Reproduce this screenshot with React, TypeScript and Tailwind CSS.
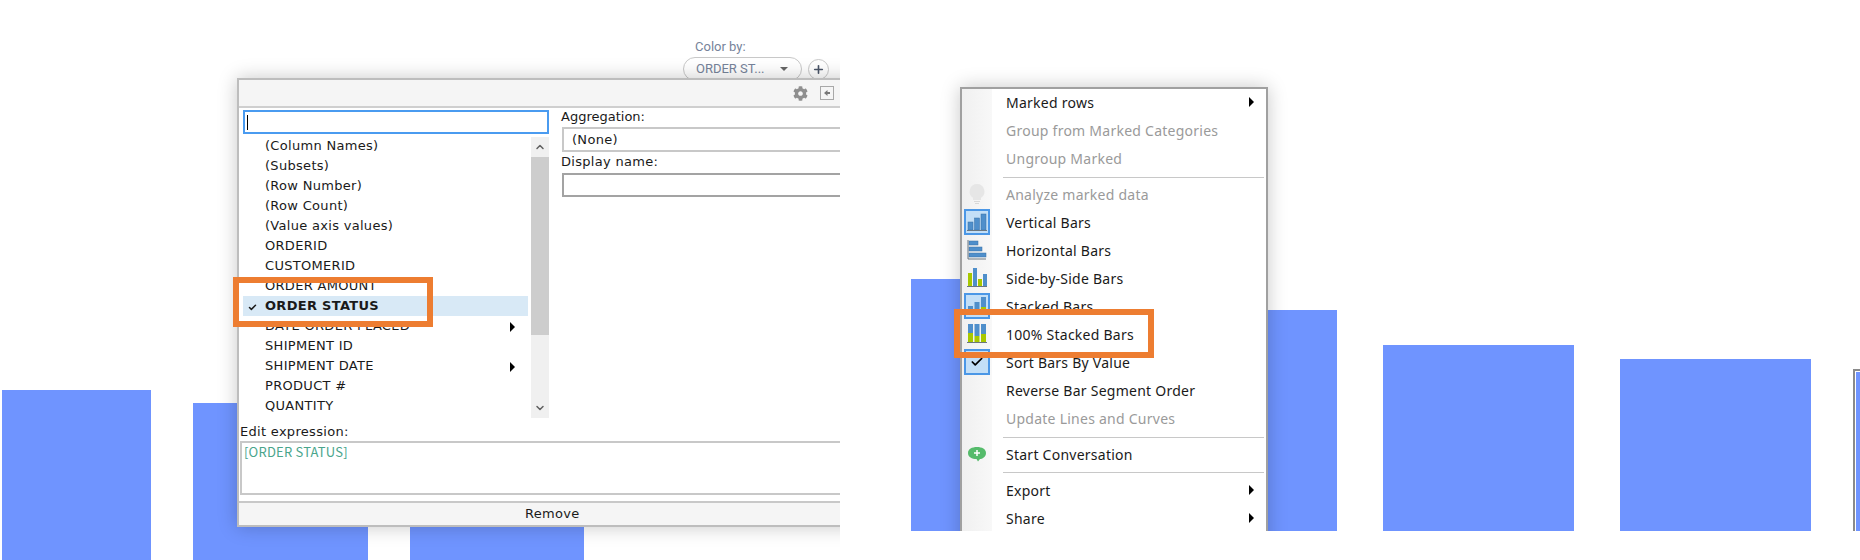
import { ChevronDown, ChevronUp, Check, Plus } from "lucide-react"
import { FaCog } from "react-icons/fa"

const fieldRows = [
  "(Column Names)",
  "(Subsets)",
  "(Row Number)",
  "(Row Count)",
  "(Value axis values)",
  "ORDERID",
  "CUSTOMERID",
  "ORDER AMOUNT",
  "ORDER STATUS",
  "DATE ORDER PLACED",
  "SHIPMENT ID",
  "SHIPMENT DATE",
  "PRODUCT #",
  "QUANTITY",
  "PRODUCT CATEGORY",
]

function Triangle() {
  return <span className="block w-0 h-0 border-y-[5px] border-y-transparent border-l-[5px] border-l-black" />
}

function BarsIcon({ kind }: { kind: string }) {
  const blue = "#4f8fcb"
  const lime = "#a8c800"
  return (
    <svg width="22" height="22" viewBox="0 0 22 22">
      {kind === "vertical" && (
        <g fill={blue} stroke="#3b70a5" strokeWidth="0.5">
          <rect x="2" y="11" width="5" height="8" />
          <rect x="8.500" y="7" width="5" height="12" />
          <rect x="15" y="3" width="5" height="16" />
        </g>
      )}
      {kind === "horizontal" && (
        <g fill={blue} stroke="#3b70a5" strokeWidth="0.5">
          <rect x="3" y="2" width="9" height="4" />
          <rect x="3" y="8" width="13" height="4" />
          <rect x="3" y="14" width="17" height="4" />
        </g>
      )}
      {kind === "side" && (
        <g>
          <rect x="2" y="6" width="4" height="13" fill={lime} />
          <rect x="7" y="1" width="4" height="18" fill={blue} />
          <rect x="12" y="12" width="4" height="7" fill={lime} />
          <rect x="17" y="7" width="4" height="12" fill={blue} />
        </g>
      )}
      {kind === "stacked" && (
        <g>
          <rect x="2" y="11" width="5" height="4" fill={blue} />
          <rect x="2" y="15" width="5" height="4" fill={lime} />
          <rect x="8.500" y="7" width="5" height="7" fill={blue} />
          <rect x="8.500" y="14" width="5" height="5" fill={lime} />
          <rect x="15" y="2" width="5" height="10" fill={blue} />
          <rect x="15" y="12" width="5" height="7" fill={lime} />
        </g>
      )}
      {kind === "full" && (
        <g>
          <rect x="2" y="1" width="5" height="9" fill={blue} />
          <rect x="2" y="10" width="5" height="9" fill={lime} />
          <rect x="8.500" y="1" width="5" height="12" fill={blue} />
          <rect x="8.500" y="13" width="5" height="6" fill={lime} />
          <rect x="15" y="1" width="5" height="10" fill={blue} />
          <rect x="15" y="11" width="5" height="8" fill={lime} />
        </g>
      )}
      {kind === "horizontal" ? (
        <path d="M2 1V20H20" fill="none" stroke="#6b7780" strokeWidth="1" />
      ) : (
        <path d="M1 19.500H21" fill="none" stroke="#6b7780" strokeWidth="1" />
      )}
    </svg>
  )
}

function MenuRow({
  label,
  muted,
  arrow,
  icon,
  active,
}: {
  label: string
  muted?: boolean
  arrow?: boolean
  icon?: React.ReactNode
  active?: boolean
}) {
  return (
    <div className="flex items-center h-7">
      <div className="w-[30px] h-7 shrink-0 flex items-center justify-center">
        {active ? (
          <div className="w-[26px] h-[26px] flex items-center justify-center border-2 border-[#4b97e6] bg-[#c3dff7]">
            {icon}
          </div>
        ) : (
          icon
        )}
      </div>
      <span className={"ml-[14px] flex-1 " + (muted ? "text-[#9a9a9a]" : "text-[#1a1a1a]")}>{label}</span>
      {arrow && (
        <span className="mr-[12px]">
          <Triangle />
        </span>
      )}
    </div>
  )
}

function MenuSeparator({ className }: { className: string }) {
  return (
    <div className={"flex " + className}>
      <div className="w-[41px] shrink-0" />
      <div className="flex-1 h-px bg-[#c8c8c8] mr-0.5" />
    </div>
  )
}

export default function App() {
  return (
    <div className="flex w-[1860px] h-[560px] bg-white overflow-hidden font-['Noto_Sans',sans-serif]">
      {/* Left — column selector */}
      <div className="relative w-[840px] h-[560px] shrink-0 overflow-hidden">
        <div className="flex items-end gap-[42px] h-full pl-0.5">
          <div className="w-[149px] h-[170px] bg-[#6f94ff]" />
          <div className="w-[175px] h-[157px] bg-[#6f94ff]" />
          <div className="w-[174px] h-[150px] bg-[#6f94ff]" />
        </div>

        <div className="absolute left-[683px] top-[38px] w-[150px]">
          <p className="ml-3 text-[13px] leading-[18px] text-[#76839a] font-['Roboto',sans-serif]">Color by:</p>
          <div className="flex items-center gap-[6px] mt-px">
            <div className="w-[119px] h-[24px] flex items-center rounded-full border border-[#c8c8c8] pl-[12px] text-[13px] text-[#76839a] font-['Roboto',sans-serif]">
              <span className="flex-1">ORDER ST...</span>
              <span className="mr-[13px] w-0 h-0 border-x-4 border-x-transparent border-t-[4px] border-t-[#666]" />
            </div>
            <div className="w-[21px] h-[21px] flex items-center justify-center rounded-full border border-[#c8c8c8]">
              <Plus size={13} strokeWidth={3} className="text-[#4a5568]" />
            </div>
          </div>
        </div>

        {/* Dialog runs off the right edge of the crop */}
        <div className="absolute left-[237px] top-[78px] w-[640px] h-[449px] flex flex-col bg-white border-2 border-[#bdbdbd] shadow-[0_0_18px_rgba(0,0,0,0.22)] font-['DejaVu_Sans',sans-serif] text-[13px] tracking-[0.3px] text-[#1a1a1a]">
          <div className="h-[28px] shrink-0 flex items-center bg-[#f5f5f5] border-b-2 border-[#cfcfcf] pl-[554px]">
            <FaCog size={15} className="text-[#8f8f8f]" />
            <div className="ml-[12px] w-[14px] h-[14px] flex items-center justify-center border border-[#a8a8a8]">
              <svg width="8" height="8" viewBox="0 0 8 8">
                <path d="M1 4L4.500 1V3H7V5H4.500V7z" fill="#777" />
              </svg>
            </div>
          </div>

          <div className="flex h-[311px] shrink-0">
            <div className="w-[310px] shrink-0 pl-1 pt-0.5">
              <div className="w-[306px] h-[24px] border-2 border-[#4a9bf0] flex items-center pl-0.5">
                <span className="w-px h-[15px] bg-black" />
              </div>
              <div className="flex h-[285px] pt-[2px]">
                <div className="w-[285px] h-[285px] shrink-0 overflow-hidden">
                  {fieldRows.map((row) => (
                    <div
                      key={row}
                      className={
                        "h-5 flex items-center relative pl-[22px] " +
                        (row === "ORDER STATUS" ? "bg-[#d8e9f6] font-bold" : "")
                      }
                    >
                      {row === "ORDER STATUS" && <Check size={9} strokeWidth={4} className="absolute left-[5px] top-[7px]" />}
                      <span>{row}</span>
                      {(row === "DATE ORDER PLACED" || row === "SHIPMENT DATE") && (
                        <span className="absolute left-[267px] top-[6px]">
                          <Triangle />
                        </span>
                      )}
                    </div>
                  ))}
                </div>
                <div className="ml-[3px] mt-px w-[18px] h-[281px] flex flex-col bg-[#f0f0f0]">
                  <div className="h-5 flex items-center justify-center">
                    <ChevronUp size={12} strokeWidth={3} className="text-[#606060]" />
                  </div>
                  <div className="h-[178px] bg-[#cdcdcd]" />
                  <div className="mt-auto h-5 flex items-center justify-center">
                    <ChevronDown size={12} strokeWidth={3} className="text-[#606060]" />
                  </div>
                </div>
              </div>
            </div>

            <div className="flex-1 pl-[12px]">
              <p className="h-[19px] leading-[17px] tracking-normal">Aggregation:</p>
              <div className="h-[25px] border-2 border-[#c8c8c8] flex items-center pl-2 ml-px">(None)</div>
              <p className="h-[21px] leading-[20px]">Display name:</p>
              <div className="h-[24px] border-2 border-[#a3a3a3] ml-px" />
            </div>
          </div>

          <div className="flex-1 flex flex-col pl-[1px]">
            <p className="h-[22px] leading-[26px]">Edit expression:</p>
            <div className="h-[54px] border-2 border-[#c8c8c8] pl-0.5 font-['Noto_Sans_CJK_KR',sans-serif] text-[13px] tracking-[0.2px] leading-[15px] pt-px text-[#4aa58c]">
              [ORDER STATUS]
            </div>
          </div>

          <div className="h-[24px] shrink-0 flex items-center bg-[#f5f5f5] border-t-2 border-[#c8c8c8] pl-[286px]">
            Remove
          </div>
        </div>

        <div className="absolute left-[233px] top-[277px] w-[200px] h-[50px] border-[6px] border-[#ed7d31]" />
      </div>

      {/* Right — bar chart context menu */}
      <div className="relative ml-[71px] w-[949px] h-[531px] overflow-hidden">
        <div className="flex items-end h-full">
          <div className="w-[190px] h-[252px] shrink-0 bg-[#6f94ff]" />
          <div className="ml-[45px] w-[191px] h-[221px] shrink-0 bg-[#6f94ff]" />
          <div className="ml-[46px] w-[191px] h-[186px] shrink-0 bg-[#6f94ff]" />
          <div className="ml-[46px] w-[191px] h-[172px] shrink-0 bg-[#6f94ff]" />
          <div className="ml-[42px] w-[7px] h-[162px] shrink-0 border-l-2 border-t-2 border-[#8a8a8a] pl-[1px] pt-[1px]">
            <div className="h-full bg-[#6f94ff]" />
          </div>
        </div>

        <div className="absolute left-[49px] top-[87px] w-[308px] h-[470px] flex flex-col bg-white border-2 border-[#a0a0a0] shadow-[0_0_18px_rgba(0,0,0,0.22)] text-[14px] tracking-[0.25px]">
          <div className="absolute left-0 top-0 bottom-0 w-[30px] bg-linear-to-r from-[#f0f0f0] to-[#f8f8f8]" />
          <div className="relative">
            <div className="-mt-px">
              <MenuRow label="Marked rows" arrow />
              <MenuRow label="Group from Marked Categories" muted />
              <MenuRow label="Ungroup Marked" muted />
            </div>
            <MenuSeparator className="mt-[5px] mb-[2px]" />
            <MenuRow
              label="Analyze marked data"
              muted
              icon={
                <svg width="18" height="22" viewBox="0 0 18 22">
                  <path d="M9 1a7.500 7.500 0 0 0-4 13.800V17h8v-2.200A7.500 7.500 0 0 0 9 1z" fill="#e6e6e6" />
                  <path d="M6 18.500h6M7 20.500h4" stroke="#d8d8d8" strokeWidth="1.2" />
                </svg>
              }
            />
            <MenuRow label="Vertical Bars" active icon={<BarsIcon kind="vertical" />} />
            <MenuRow label="Horizontal Bars" icon={<BarsIcon kind="horizontal" />} />
            <MenuRow label="Side-by-Side Bars" icon={<BarsIcon kind="side" />} />
            <MenuRow label="Stacked Bars" active icon={<BarsIcon kind="stacked" />} />
            <MenuRow label="100% Stacked Bars" icon={<BarsIcon kind="full" />} />
            <MenuRow label="Sort Bars By Value" active icon={<Check size={14} strokeWidth={3} className="text-black" />} />
            <MenuRow label="Reverse Bar Segment Order" />
            <MenuRow label="Update Lines and Curves" muted />
            <MenuSeparator className="mt-[5px] mb-[2px]" />
            <MenuRow
              label="Start Conversation"
              icon={
                <svg width="20" height="16" viewBox="0 0 20 16">
                  <path d="M10 1c5 0 9 2 9 6s-4 6-6 6l-2 2.500L9.500 13C5 13 1 11 1 7s4-6 9-6z" fill="#55bb6b" />
                  <path d="M10 4v6M7 7h6" stroke="#fff" strokeWidth="1.500" />
                </svg>
              }
            />
            <MenuSeparator className="mt-[4px] mb-[3px]" />
            <MenuRow label="Export" arrow />
            <MenuRow label="Share" arrow />
          </div>
        </div>

        <div className="absolute left-[43px] top-[309px] w-[200px] h-[49px] border-[6px] border-[#ed7d31]" />
      </div>
    </div>
  )
}
